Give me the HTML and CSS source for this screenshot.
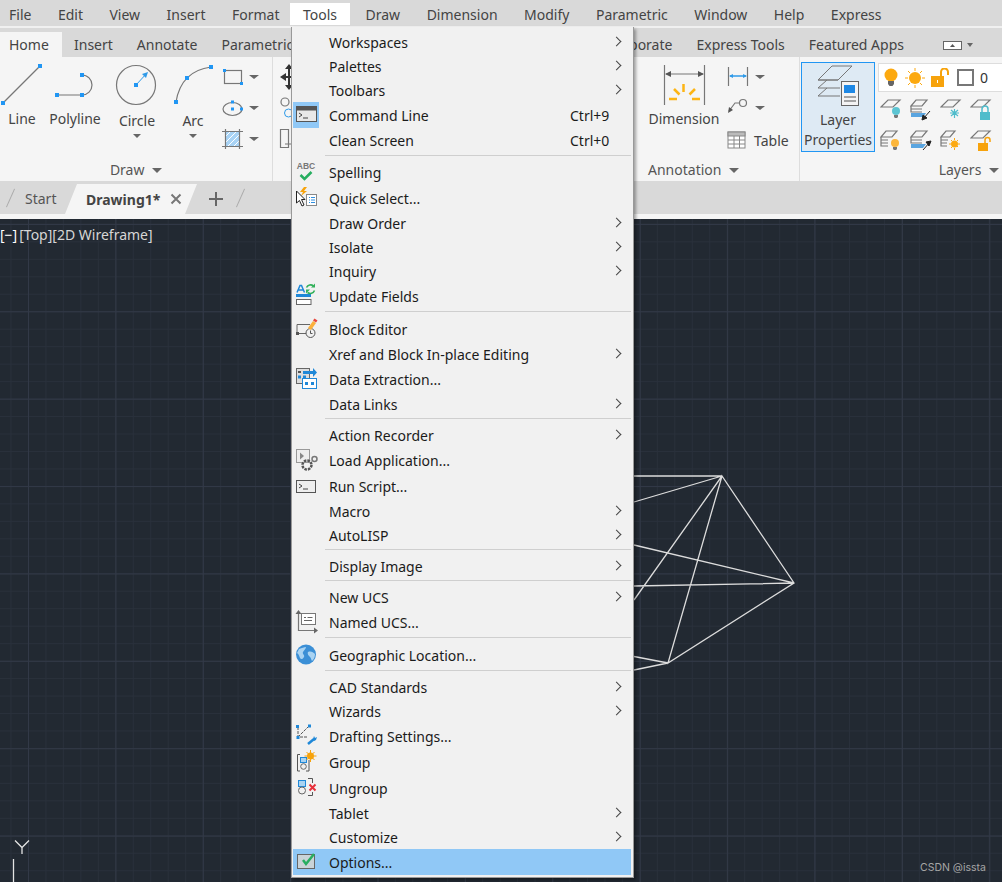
FILE: index.html
```html
<!DOCTYPE html>
<html lang="en">
<head>
    <meta charset="UTF-8">
    <meta name="viewport" content="width=device-width, initial-scale=1.0">
    <link rel="stylesheet" href="styles.css">
    <title>AutoCAD - Tools menu</title>
</head>
<body>
<div class="app">

    <div class="menubar">
        <span class="menubar-item">File</span>
        <span class="menubar-item">Edit</span>
        <span class="menubar-item">View</span>
        <span class="menubar-item">Insert</span>
        <span class="menubar-item">Format</span>
        <span class="menubar-item menubar-open">Tools</span>
        <span class="menubar-item">Draw</span>
        <span class="menubar-item">Dimension</span>
        <span class="menubar-item">Modify</span>
        <span class="menubar-item">Parametric</span>
        <span class="menubar-item">Window</span>
        <span class="menubar-item">Help</span>
        <span class="menubar-item">Express</span>
    </div>

    <div class="ribbon-tabs">
        <span class="ribbon-tab ribbon-tab-active">Home</span>
        <span class="ribbon-tab">Insert</span>
        <span class="ribbon-tab">Annotate</span>
        <span class="ribbon-tab">Parametric</span>
        <div class="ribbon-tabs-right">
            <span class="ribbon-tab">Collaborate</span>
            <span class="ribbon-tab">Express Tools</span>
            <span class="ribbon-tab">Featured Apps</span>
            <svg class="ribbon-toggle" width="30" height="12" viewBox="0 0 30 12">
                <rect x="0.5" y="2.5" width="18" height="8" fill="#fff" stroke="#666"/>
                <path d="M7 8l2.5-3 2.5 3z" fill="#555"/>
                <path d="M24 4h6l-3 4z" fill="#666"/>
            </svg>
        </div>
    </div>

    <div class="ribbon">
        <!-- Draw -->
        <section class="panel panel-draw">
            <div class="panel-body">
                <div class="tool tool-line">
                    <svg width="44" height="46" viewBox="0 0 44 46">
                        <path d="M3 41L40 4" class="ln"/>
                        <rect x="1" y="39" width="4" height="4" class="pt"/>
                        <rect x="38" y="2" width="4" height="4" class="pt"/>
                    </svg>
                    <span>Line</span>
                </div>
                <div class="tool tool-polyline">
                    <svg width="62" height="46" viewBox="0 0 62 46">
                        <path d="M13 33H38A10 10 0 0 0 38 13" class="ln"/>
                        <rect x="11" y="31" width="4" height="4" class="pt"/>
                        <rect x="36" y="31" width="4" height="4" class="pt"/>
                        <rect x="36" y="11" width="4" height="4" class="pt"/>
                    </svg>
                    <span>Polyline</span>
                </div>
                <div class="tool tool-circle">
                    <svg width="62" height="46" viewBox="0 0 62 46">
                        <circle cx="30" cy="23" r="19.5" class="ln"/>
                        <path d="M30 23L41 11" stroke="#2f9ae8" fill="none"/>
                        <path d="M42 10l-6 2 4 4z" fill="#2f9ae8"/>
                        <rect x="28" y="21" width="4" height="4" class="pt"/>
                    </svg>
                    <span>Circle</span>
                    <i class="caret"></i>
                </div>
                <div class="tool tool-arc">
                    <svg width="50" height="46" viewBox="0 0 50 46">
                        <path d="M8 40Q13 9 43 5" class="ln"/>
                        <rect x="6" y="38" width="4" height="4" class="pt"/>
                        <rect x="17" y="14" width="4" height="4" class="pt"/>
                        <rect x="41" y="3" width="4" height="4" class="pt"/>
                    </svg>
                    <span>Arc</span>
                    <i class="caret"></i>
                </div>
                <div class="small-col">
                    <div class="small-tool">
                        <svg width="22" height="22" viewBox="0 0 22 22">
                            <rect x="3.5" y="4.5" width="17" height="13" class="ln"/>
                            <rect x="2" y="3" width="3" height="3" class="pt"/>
                            <rect x="19" y="16" width="3" height="3" class="pt"/>
                        </svg>
                        <i class="caret"></i>
                    </div>
                    <div class="small-tool">
                        <svg width="22" height="22" viewBox="0 0 22 22">
                            <ellipse cx="11.5" cy="12" rx="9.5" ry="6.5" class="ln"/>
                            <rect x="10" y="3.5" width="3" height="3" class="pt"/>
                            <rect x="10" y="10.5" width="3" height="3" class="pt"/>
                            <rect x="19" y="10.5" width="3" height="3" class="pt"/>
                        </svg>
                        <i class="caret"></i>
                    </div>
                    <div class="small-tool">
                        <svg width="22" height="22" viewBox="0 0 22 22">
                            <rect x="4" y="3" width="15" height="15" fill="#a8d3f5"/>
                            <path d="M4 9l6-6M4 15l12-12M7 18l12-12M13 18l6-6" stroke="#fff"/>
                            <path d="M1 3.5h21M1 18.5h21M4.5 1v20M18.5 1v20" class="ln"/>
                        </svg>
                        <i class="caret"></i>
                    </div>
                </div>
            </div>
            <div class="panel-title">Draw <i class="caret"></i></div>
        </section>

        <!-- Modify, nearly all of it sits behind the open menu -->
        <section class="panel panel-modify">
            <div class="panel-body">
                <svg width="40" height="96" viewBox="0 0 40 96">
                    <path d="M10 15H30M16 4V27" stroke="#333" stroke-width="2" fill="none"/>
                    <path d="M7 15l6-4v8zM12 7l4-5 4 5zM12 23l4 5 4-5z" fill="#333"/>
                    <circle cx="12" cy="40" r="4" class="ln"/>
                    <circle cx="15.500" cy="51" r="4" fill="none" stroke="#2f9ae8"/>
                    <path d="M7.500 67.500h8v18h-8zM12 82h10" class="ln"/>
                </svg>
            </div>
            <div class="panel-title">Modify</div>
        </section>

        <!-- Annotation -->
        <section class="panel panel-annotation">
            <div class="panel-body">
                <div class="tool tool-dim">
                    <svg width="60" height="46" viewBox="0 0 60 46">
                        <path d="M10.500 3V43M50.500 3V43M12 12H49" class="ln"/>
                        <path d="M11 12l6-3v6zM50 12l-6-3v6z" fill="#555"/>
                        <path d="M29.500 22V30M20 27L25.500 32.500M41 27L35.500 32.500M15 37H23M46 37H38" fill="none" stroke="#fdb515" stroke-width="2.500"/>
                    </svg>
                    <span>Dimension</span>
                </div>
                <div class="annot-col">
                    <div class="small-tool">
                        <svg width="22" height="22" viewBox="0 0 22 22">
                            <path d="M1.500 1V20M20.500 1V20" class="ln"/>
                            <path d="M3 10H19" stroke="#2f9ae8" stroke-width="1.500"/>
                            <path d="M2 10l4-2v4zM20 10l-4-2v4z" fill="#2f9ae8"/>
                        </svg>
                        <i class="caret"></i>
                    </div>
                    <div class="small-tool">
                        <svg width="22" height="22" viewBox="0 0 22 22">
                            <circle cx="16" cy="6" r="3.500" class="ln"/>
                            <path d="M12.500 6H8L2 14" class="ln"/>
                            <path d="M1 16l1-6 4 3z" fill="#555"/>
                        </svg>
                        <i class="caret"></i>
                    </div>
                    <div class="table-tool">
                        <svg width="19" height="18" viewBox="0 0 19 18">
                            <rect x="1" y="1" width="17" height="16" fill="#fff" stroke="#888"/>
                            <rect x="1" y="1" width="17" height="4" fill="#bbb" stroke="#888"/>
                            <path d="M1 9h17M1 13h17M7 5v12M12.500 5v12" stroke="#888"/>
                        </svg>
                        <span>Table</span>
                    </div>
                </div>
            </div>
            <div class="panel-title">Annotation <i class="caret"></i></div>
        </section>

        <!-- Layers -->
        <section class="panel panel-layers">
            <div class="panel-body">
                <div class="layer-button">
                    <svg width="46" height="46" viewBox="0 0 46 46">
                        <path d="M3 16L17 2H37L23 16ZM3 16H23M3 24L12 16M3 24H25M3 32L12 24M3 32H25" fill="none" stroke="#777"/>
                        <rect x="26.500" y="17.500" width="17" height="24" fill="#f4f4f4" stroke="#666"/>
                        <rect x="29" y="21" width="11" height="8" fill="#1e88e5"/>
                        <path d="M29 33h12M29 37h12" stroke="#555"/>
                    </svg>
                    <span>Layer</span>
                    <span>Properties</span>
                </div>
                <div class="layer-side">
                    <div class="layer-combo">
                        <svg width="18" height="22" viewBox="0 0 18 22">
                            <circle cx="9" cy="8" r="6.500" fill="#fca910"/>
                            <path d="M6 14h6v3l-1.500 2h-3L6 17z" fill="#666"/>
                        </svg>
                        <svg width="20" height="20" viewBox="0 0 20 20">
                            <circle cx="10" cy="10" r="6" fill="#fca910"/>
                            <path d="M10 0v3M10 17v3M0 10h3M17 10h3M3 3l2 2M15 15l2 2M3 17l2-2M15 5l2-2" stroke="#fca910"/>
                        </svg>
                        <svg width="20" height="20" viewBox="0 0 20 20">
                            <rect x="1" y="8" width="13" height="11" fill="#f7a30c"/>
                            <path d="M11 8V4a3.500 3.500 0 0 1 7 0v3" fill="none" stroke="#f7a30c" stroke-width="2"/>
                            <rect x="7" y="12" width="1" height="3" fill="#fff"/>
                        </svg>
                        <span class="layer-swatch"></span>
                        <span class="layer-name">0</span>
                    </div>
                    <div class="layer-grid">
                        <svg width="22" height="24" viewBox="0 0 22 24">
                            <path d="M1 9L8 2H20L13 9Z" class="ln"/>
                            <circle cx="16" cy="13" r="4" fill="#5cc4d2"/>
                            <path d="M14 17h4v2l-1 1h-2l-1-1z" fill="#777"/>
                        </svg>
                        <svg width="22" height="24" viewBox="0 0 22 24">
                            <path d="M1 8L6 2H17L12 8ZM1 8V11H12M1 11V14H12" class="ln"/>
                            <path d="M1 15H16L13 19H1Z" fill="#5aa5e0"/>
                            <path d="M20 13L13 21M12 22l1-5 4 3z" stroke="#222" fill="#222"/>
                        </svg>
                        <svg width="22" height="24" viewBox="0 0 22 24">
                            <path d="M1 9L8 2H20L13 9Z" class="ln"/>
                            <path d="M10 15h9M14.500 11v9M11 12l7 6M18 12l-7 6" stroke="#4fbccb" stroke-width="1.200"/>
                        </svg>
                        <svg width="22" height="24" viewBox="0 0 22 24">
                            <path d="M1 9L8 2H20L13 9Z" class="ln"/>
                            <rect x="10" y="14" width="10" height="8" fill="#4fbccb"/>
                            <path d="M12 14v-3a3 3 0 0 1 6 0v3" fill="none" stroke="#4fbccb" stroke-width="1.500"/>
                        </svg>
                        <svg width="22" height="24" viewBox="0 0 22 24">
                            <path d="M1 8L6 2H17L12 8ZM1 8V11H8M1 11V14H8M1 14V17H8" class="ln"/>
                            <circle cx="15" cy="14" r="4" fill="#fcb63c"/>
                            <path d="M13 18h4v2l-1 1h-2l-1-1z" fill="#777"/>
                        </svg>
                        <svg width="22" height="24" viewBox="0 0 22 24">
                            <path d="M1 8L6 2H17L12 8ZM1 8V11H12M1 11V14H12" class="ln"/>
                            <path d="M1 15H16L13 19H1Z" fill="#5aa5e0"/>
                            <path d="M13 21L20 13M21 12l-5 1 3 4z" stroke="#222" fill="#222"/>
                        </svg>
                        <svg width="22" height="24" viewBox="0 0 22 24">
                            <path d="M1 8L6 2H15L10 8ZM1 8V11H8M1 11V14H7M1 14V17H7" class="ln"/>
                            <circle cx="14.500" cy="15" r="3.500" fill="#fca910"/>
                            <path d="M14.500 9v2M14.500 19v2M9 15h2M18 15h2M11 11l1 1M18 18l-1-1M11 19l1-1M18 11l-1 1" stroke="#fca910"/>
                        </svg>
                        <svg width="22" height="24" viewBox="0 0 22 24">
                            <path d="M1 9L8 2H20L13 9Z" class="ln"/>
                            <rect x="8" y="14" width="10" height="8" fill="#f7a30c"/>
                            <path d="M15 14v-3a2.500 2.500 0 0 1 5 0v2" fill="none" stroke="#f7a30c" stroke-width="1.500"/>
                        </svg>
                    </div>
                </div>
            </div>
            <div class="panel-title panel-title-right">Layers <i class="caret"></i></div>
        </section>
    </div>

    <div class="doc-tabs">
        <i class="doc-slash"></i>
        <span class="doc-start">Start</span>
        <div class="doc-active">
            <b>Drawing1*</b>
            <svg width="12" height="12" viewBox="0 0 12 12">
                <path d="M1.500 1.500l9 9M10.500 1.500l-9 9" stroke="#777" stroke-width="2"/>
            </svg>
        </div>
        <svg class="doc-plus" width="16" height="16" viewBox="0 0 16 16">
            <path d="M8 1v14M1 8h14" stroke="#666" stroke-width="2"/>
        </svg>
        <i class="doc-slash doc-slash-end"></i>
    </div>
    <div class="doc-strip"></div>

    <div class="canvas">
        <svg class="wire" width="1002" height="663" viewBox="0 219 1002 663">
            <path d="M722 476H634M722 476L634 502M722 476L794 583L668 663ZM722 476L634 600M634 545L794 583L634 586M634 656.500L668 663L634 670" fill="none" stroke="#dcdcdc" stroke-width="1.300"/>
        </svg>
        <div class="viewport-label"><span class="vp-bright">[&minus;]</span>[Top][2D Wireframe]</div>
        <svg class="ucs" width="30" height="48" viewBox="0 0 30 48">
            <path d="M16 1.500L23 8.500L30 1.500M23 8.500V15M14.500 20V48" fill="none" stroke="#e4e4e4" stroke-width="1.300" transform="translate(-7 0)"/>
        </svg>
        <div class="watermark">CSDN @issta</div>
    </div>

    <!-- Tools dropdown -->
    <div class="menu">
        <div class="row"><span class="row-label">Workspaces</span><i class="chev"></i></div>
        <div class="row"><span class="row-label">Palettes</span><i class="chev"></i></div>
        <div class="row"><span class="row-label">Toolbars</span><i class="chev"></i></div>
        <div class="row row-tall">
            <span class="row-icon row-icon-on">
                <svg width="26" height="26" viewBox="0 0 26 26">
                    <rect x="3.500" y="4.500" width="20" height="15" fill="#e8e8e8" stroke="#555"/>
                    <rect x="3.500" y="4.500" width="20" height="4" fill="#555"/>
                    <path d="M6 11l3 2-3 2M10 16h5" fill="none" stroke="#444"/>
                </svg>
            </span>
            <span class="row-label">Command Line</span><span class="row-key">Ctrl+9</span>
        </div>
        <div class="row row-mid"><span class="row-label">Clean Screen</span><span class="row-key">Ctrl+0</span></div>
        <div class="sep"></div>
        <div class="row row-mid">
            <span class="row-icon">
                <svg width="26" height="26" viewBox="0 0 26 26">
                    <text x="13" y="9" class="abc">ABC</text>
                    <path d="M7.500 15l4 4 7-7" fill="none" stroke="#27ae60" stroke-width="2.500"/>
                </svg>
            </span>
            <span class="row-label">Spelling</span>
        </div>
        <div class="row row-tall">
            <span class="row-icon">
                <svg width="26" height="26" viewBox="0 0 26 26">
                    <rect x="13.500" y="9.500" width="10" height="11" fill="#fff" stroke="#888"/>
                    <path d="M16 12.500h1M18 12.500h4M16 15h1M18 15h4M16 17.500h1M18 17.500h4" stroke="#2f8fe0"/>
                    <path d="M11 2l-4 5h3l-2 4 6-5h-3l3-4z" fill="#f7a30c"/>
                    <path d="M3.500 6V18L6.500 15.500 9 21 11 20 8.500 14.500H12Z" fill="#fff" stroke="#222"/>
                </svg>
            </span>
            <span class="row-label">Quick Select...</span>
        </div>
        <div class="row"><span class="row-label">Draw Order</span><i class="chev"></i></div>
        <div class="row"><span class="row-label">Isolate</span><i class="chev"></i></div>
        <div class="row"><span class="row-label">Inquiry</span><i class="chev"></i></div>
        <div class="row row-tall">
            <span class="row-icon">
                <svg width="26" height="26" viewBox="0 0 26 26">
                    <path d="M4 9.500L7 2.500H8.500L11.500 9.500M5.500 7h4.500" fill="none" stroke="#1f88d8" stroke-width="1.500"/>
                    <path d="M3 11h15v3H3z" fill="#1f88d8"/>
                    <rect x="3.500" y="16.500" width="14.500" height="5" fill="#fff" stroke="#666"/>
                    <path d="M13.500 4.500a4.500 4.500 0 0 1 7-1.500M21.500 7.500a4.500 4.500 0 0 1-7 2" fill="none" stroke="#32b05a" stroke-width="1.600"/>
                    <path d="M22 0.500v4h-4zM13 10.500v-4h4z" fill="#32b05a"/>
                </svg>
            </span>
            <span class="row-label">Update Fields</span>
        </div>
        <div class="sep"></div>
        <div class="row row-tall">
            <span class="row-icon">
                <svg width="26" height="26" viewBox="0 0 26 26">
                    <path d="M4 8.500h13M4 8.500v9h9" fill="none" stroke="#666"/>
                    <rect x="3" y="16" width="3" height="3" fill="#555"/>
                    <circle cx="17.500" cy="17" r="4.500" fill="#f1f1f1" stroke="#555"/>
                    <path d="M17.500 14.500v3h2" fill="none" stroke="#555"/>
                    <path d="M15 12l5-7 3 2-5 7z" fill="#fbb03b"/>
                    <path d="M20 4.500l1.500-2 3 2-1.500 2z" fill="#e8453c"/>
                </svg>
            </span>
            <span class="row-label">Block Editor</span>
        </div>
        <div class="row"><span class="row-label">Xref and Block In-place Editing</span><i class="chev"></i></div>
        <div class="row row-tall">
            <span class="row-icon">
                <svg width="26" height="26" viewBox="0 0 26 26">
                    <rect x="3.500" y="2.500" width="13" height="15" fill="#ddd" stroke="#666"/>
                    <path d="M5 6h3M10 6h3" stroke="#555" stroke-width="2"/>
                    <path d="M5 11h3M10 11h3" stroke="#1f88d8" stroke-width="3"/>
                    <path d="M10 5h10v-3l4 4.500-4 4.500v-3h-10z" fill="#1f88d8"/>
                    <rect x="9.500" y="12.500" width="14" height="10" fill="#fff" stroke="#1f88d8"/>
                    <path d="M12 17.500h3M18 17.500h3" stroke="#1f88d8" stroke-width="3"/>
                </svg>
            </span>
            <span class="row-label">Data Extraction...</span>
        </div>
        <div class="row"><span class="row-label">Data Links</span><i class="chev"></i></div>
        <div class="sep"></div>
        <div class="row"><span class="row-label">Action Recorder</span><i class="chev"></i></div>
        <div class="row row-tall">
            <span class="row-icon">
                <svg width="26" height="26" viewBox="0 0 26 26">
                    <rect x="3.500" y="2.500" width="13" height="13" fill="#eee" stroke="#999"/>
                    <path d="M7 5.500l4 3.500-4 3.500z" fill="#888"/>
                    <circle cx="14" cy="18" r="4.500" fill="none" stroke="#555" stroke-width="2.500" stroke-dasharray="2.500 1"/>
                    <circle cx="21.500" cy="12" r="2.500" fill="none" stroke="#777" stroke-width="1.500"/>
                </svg>
            </span>
            <span class="row-label">Load Application...</span>
        </div>
        <div class="row row-tall">
            <span class="row-icon">
                <svg width="26" height="26" viewBox="0 0 26 26">
                    <rect x="3.500" y="7.500" width="19" height="12" fill="#eee" stroke="#555"/>
                    <path d="M6 11l3 2-3 2M10 16h5" fill="none" stroke="#444"/>
                </svg>
            </span>
            <span class="row-label">Run Script...</span>
        </div>
        <div class="row"><span class="row-label">Macro</span><i class="chev"></i></div>
        <div class="row"><span class="row-label">AutoLISP</span><i class="chev"></i></div>
        <div class="sep"></div>
        <div class="row"><span class="row-label">Display Image</span><i class="chev"></i></div>
        <div class="sep"></div>
        <div class="row"><span class="row-label">New UCS</span><i class="chev"></i></div>
        <div class="row row-tall">
            <span class="row-icon">
                <svg width="26" height="26" viewBox="0 0 26 26">
                    <path d="M5.500 4V21.500H22" fill="none" stroke="#777" stroke-width="1.200"/>
                    <path d="M5.500 1l-3 4h6zM25 21.500l-4-3v6z" fill="#666"/>
                    <rect x="8.500" y="4.500" width="14" height="11" fill="#fff" stroke="#777"/>
                    <path d="M11 8.500h2M14.500 8.500h5M11 11.500h8" stroke="#666"/>
                </svg>
            </span>
            <span class="row-label">Named UCS...</span>
        </div>
        <div class="sep"></div>
        <div class="row row-tall">
            <span class="row-icon">
                <svg width="26" height="26" viewBox="0 0 26 26">
                    <circle cx="13" cy="12.500" r="10" fill="#3b8fd6"/>
                    <path d="M6 7c3-1 5-2 7-2 0 2-2 3-3 5s2 3 1 5-3 3-4 1-1-4-3-5zM15 10c3-1 5 0 7 2 0 3-1 5-3 7-1-2-1-3-2-4s-3-3-2-5z" fill="#a9d3f2"/>
                </svg>
            </span>
            <span class="row-label">Geographic Location...</span>
        </div>
        <div class="sep"></div>
        <div class="row"><span class="row-label">CAD Standards</span><i class="chev"></i></div>
        <div class="row"><span class="row-label">Wizards</span><i class="chev"></i></div>
        <div class="row row-tall">
            <span class="row-icon">
                <svg width="26" height="26" viewBox="0 0 26 26">
                    <path d="M5 4V14H15M5 14L16 3" fill="none" stroke="#555" stroke-dasharray="3 1"/>
                    <rect x="3" y="2" width="3" height="3" fill="#1f88d8"/>
                    <rect x="15" y="1.500" width="3" height="3" fill="#1f88d8"/>
                    <rect x="3.500" y="13" width="3" height="3" fill="#1f88d8"/>
                    <path d="M15 21l6-5" stroke="#1f88d8" stroke-width="2.500"/>
                    <path d="M20 16l1-3 1 2 2-1-1 3-2 1z" fill="#1f88d8"/>
                </svg>
            </span>
            <span class="row-label">Drafting Settings...</span>
        </div>
        <div class="row row-tall">
            <span class="row-icon">
                <svg width="26" height="26" viewBox="0 0 26 26">
                    <path d="M7 5.500H4.500V22H7M16 11v11h-3" fill="none" stroke="#555"/>
                    <rect x="7.500" y="8.500" width="6" height="5" fill="#a9d3f2" stroke="#1f88d8"/>
                    <circle cx="10.500" cy="17.500" r="2.800" fill="none" stroke="#666"/>
                    <circle cx="17.500" cy="7" r="3.500" fill="#f7a30c"/>
                    <path d="M17.500 1v3M17.500 10v3M11.500 7h3M20.500 7h3M13.500 3l2 2M19.500 9l2 2M13.500 11l2-2M19.500 5l2-2" stroke="#f7a30c"/>
                </svg>
            </span>
            <span class="row-label">Group</span>
        </div>
        <div class="row row-tall">
            <span class="row-icon">
                <svg width="26" height="26" viewBox="0 0 26 26">
                    <path d="M15 3.500h4.500V8M19.500 17v3.500H15" fill="none" stroke="#555"/>
                    <rect x="5.500" y="5.500" width="7" height="6" fill="#a9d3f2" stroke="#1f88d8"/>
                    <circle cx="9" cy="15.500" r="3.500" fill="none" stroke="#666"/>
                    <path d="M16.500 9.500l6 6M22.500 9.500l-6 6" stroke="#e8303a" stroke-width="2"/>
                </svg>
            </span>
            <span class="row-label">Ungroup</span>
        </div>
        <div class="row"><span class="row-label">Tablet</span><i class="chev"></i></div>
        <div class="row"><span class="row-label">Customize</span><i class="chev"></i></div>
        <div class="row row-tall row-on">
            <span class="row-icon">
                <svg width="26" height="26" viewBox="0 0 26 26">
                    <rect x="4.500" y="5.500" width="17" height="14" fill="#c9d3d8" stroke="#666"/>
                    <path d="M10 11l3 4 8-10" fill="none" stroke="#27ae60" stroke-width="2.500"/>
                </svg>
            </span>
            <span class="row-label">Options...</span>
        </div>
    </div>

</div>
</body>
</html>
```

FILE: styles.css
```css
*{
    margin:0px;
    padding:0px;
    box-sizing: border-box;
}
body{
    font-family: "Noto Sans", "Open Sans", sans-serif;
    font-size: 14px;
    color: #444;
    background: #222932;
    overflow: hidden;
}
.app{
    position: relative;
    width: 1002px;
    height: 882px;
    display: flex;
    flex-direction: column;
    overflow: hidden;
}
svg{
    display: block;
    flex: none;
}
.ln{
    fill: none;
    stroke: #777;
    stroke-width: 1.2;
}
.pt{
    fill: #2196f3;
}
.caret{
    display: inline-block;
    width: 0;
    height: 0;
    border-left: 5px solid transparent;
    border-right: 5px solid transparent;
    border-top: 5px solid #666;
}

/* menu bar */
.menubar{
    height: 28px;
    flex: none;
    display: flex;
    padding: 3px 0 1px 0;
    background: #d9d9d9;
    border-bottom: 2px solid #f0f0f0;
    color: #444;
}
.menubar-item{
    padding: 0 13.250px;
    line-height: 23px;
}
.menubar-item:first-child{
    padding-left: 9px;
}
.menubar-open{
    margin: 0 2px 0 -3px;
    background: #fff;
}

/* ribbon tabs */
.ribbon-tabs{
    height: 29px;
    flex: none;
    display: flex;
    align-items: flex-end;
    background: #d9d9d9;
}
.ribbon-tab{
    height: 25px;
    line-height: 25px;
    padding: 0 12px;
}
.ribbon-tab-active{
    width: 62px;
    padding: 0 9px;
    background: #f5f5f5;
}
.ribbon-tabs-right{
    margin-left: auto;
    display: flex;
    align-items: center;
    padding-right: 29px;
}
.ribbon-toggle{
    margin-left: 27px;
}

/* ribbon */
.ribbon{
    height: 124px;
    flex: none;
    display: flex;
    background: #f5f5f5;
}
.panel{
    display: flex;
    flex-direction: column;
    padding-top: 5px;
}
.panel-body{
    display: flex;
    height: 97px;
}
.panel-title{
    height: 22px;
    line-height: 22px;
    text-align: center;
    color: #555;
}
.panel-title .caret{
    margin-left: 4px;
    vertical-align: 2px;
}
.panel-title-right{
    text-align: right;
    padding-right: 3px;
}
.panel-draw{
    width: 273px;
    border-right: 1px solid #ddd;
}
.panel-modify{
    width: 361px;
}
.panel-annotation{
    width: 166px;
    border-right: 1px solid #ddd;
}
.panel-annotation .panel-title{
    text-align: left;
    padding-left: 14px;
}
.panel-layers{
    flex: 1;
    min-width: 0;
}
.tool{
    display: flex;
    flex-direction: column;
    align-items: center;
    line-height: 22px;
}
.tool-line{
    width: 44px;
}
.tool-polyline,
.tool-circle{
    width: 62px;
}
.tool-arc{
    width: 50px;
}
.tool-circle span,
.tool-arc span{
    margin-top: 2px;
}
.tool .caret{
    flex: none;
    margin-top: 2px;
    border-width: 4px 4px 0 4px;
}
.small-col{
    display: flex;
    flex-direction: column;
    gap: 9px;
    padding: 4px 0 0 3px;
}
.small-tool{
    display: flex;
    align-items: center;
    gap: 6px;
    height: 22px;
}
.small-tool .caret{
    border-width: 4px 5px 0 5px;
}
.tool-dim{
    width: 100px;
}
.annot-col{
    display: flex;
    flex-direction: column;
    gap: 9px;
    margin-left: -7px;
    padding-top: 4px;
}
.table-tool{
    display: flex;
    align-items: center;
    gap: 8px;
    height: 22px;
    margin-top: 1px;
}

/* layers */
.layer-button{
    width: 74px;
    height: 90px;
    margin-left: 1px;
    padding-top: 1px;
    flex: none;
    display: flex;
    flex-direction: column;
    align-items: center;
    background: #deeaf4;
    border: 1px solid #2196f3;
    line-height: 20px;
}
.layer-side{
    margin-left: 3px;
    flex: 1;
    min-width: 0;
}
.layer-combo{
    height: 29px;
    display: flex;
    align-items: center;
    gap: 5px;
    padding-left: 3px;
    background: #fff;
    border: 1px solid #ddd;
    border-right: 0;
    margin-top: 1px;
}
.layer-swatch{
    width: 17px;
    height: 17px;
    border: 2px solid #777;
    background: #fff;
    margin-left: 2px;
}
.layer-name{
    margin-left: 1px;
    color: #333;
}
.layer-grid{
    display: grid;
    grid-template-columns: repeat(4, 30px);
    row-gap: 7px;
    padding: 6px 0 0 2px;
}

/* drawing tabs */
.doc-tabs{
    height: 33px;
    flex: none;
    display: flex;
    align-items: flex-end;
    background: #d9d9d9;
    padding-left: 6px;
}
.doc-slash{
    width: 1px;
    height: 20px;
    margin: 0 5px 6px 4px;
    background: #aaa;
    transform: rotate(24deg);
}
.doc-slash-end{
    margin-left: 1px;
}
.doc-start{
    margin-left: 9px;
    width: 40px;
    line-height: 30px;
    color: #555;
}
.doc-active{
    width: 132px;
    height: 30px;
    display: flex;
    align-items: center;
    gap: 10px;
    padding-left: 21px;
    background: #f5f5f5;
    clip-path: polygon(12px 0, 100% 0, 120px 100%, 0 100%);
    color: #444;
}
.doc-plus{
    margin: 0 15px 7px 11px;
}
.doc-strip{
    height: 5px;
    flex: none;
    background: #f5f5f5;
}

/* model space */
.canvas{
    position: relative;
    flex: 1;
    background-color: #222932;
    background-image:
        linear-gradient(to right, #323947 1px, transparent 1px),
        linear-gradient(to bottom, #323947 1px, transparent 1px),
        linear-gradient(to right, #29303b 1px, transparent 1px),
        linear-gradient(to bottom, #29303b 1px, transparent 1px);
    background-size: 87.400px 87.400px, 87.400px 87.400px, 17.480px 17.480px, 17.480px 17.480px;
    background-position: 28px 0, 0 4.900px, 10.500px 0, 0 4.900px;
}
.wire{
    position: absolute;
    left: 0;
    top: 0;
}
.viewport-label{
    position: absolute;
    left: 0;
    top: 6px;
    color: #d6d6d6;
    line-height: 20px;
}
.vp-bright{
    margin-right: 2px;
    color: #fff;
}
.ucs{
    position: absolute;
    left: 6px;
    top: 620px;
}
.watermark{
    position: absolute;
    right: 16px;
    bottom: 8px;
    font-size: 10.500px;
    color: #a6a6a6;
    font-family: "Inter", sans-serif;
}

/* tools menu */
.menu{
    position: absolute;
    left: 291px;
    top: 27px;
    width: 343px;
    height: 851px;
    padding: 3px 2px 0 1px;
    background: #f1f1f1;
    border-left: 1px solid #999;
    border-right: 1px solid #999;
    border-bottom: 1px solid #999;
    box-shadow: 2px 2px 3px rgba(0, 0, 0, 0.35);
    color: #1b1b1b;
}
.row{
    position: relative;
    height: 24px;
    display: flex;
    align-items: center;
    padding-left: 36px;
}
.row-mid{
    height: 25px;
}
.row-tall{
    height: 26px;
}
.row-on{
    background: #90c8f6;
}
.row-icon{
    position: absolute;
    left: 0;
    top: 0;
    width: 26px;
    height: 26px;
}
.row-icon-on{
    background: #90c8f6;
}
.row-label{
    flex: 1;
}
.row-key{
    width: 61px;
}
.chev{
    position: absolute;
    right: 11px;
    top: 50%;
    width: 7px;
    height: 7px;
    margin-top: -4px;
    border-top: 1.300px solid #444;
    border-right: 1.300px solid #444;
    transform: rotate(45deg);
}
.sep{
    height: 7px;
    margin-left: 32px;
    padding-top: 2px;
}
.sep::before{
    content: "";
    display: block;
    height: 1px;
    background: #cfcfcf;
}
.abc{
    font-family: "Liberation Sans", sans-serif;
    font-size: 8.500px;
    font-weight: bold;
    text-anchor: middle;
    fill: #777;
}
```
